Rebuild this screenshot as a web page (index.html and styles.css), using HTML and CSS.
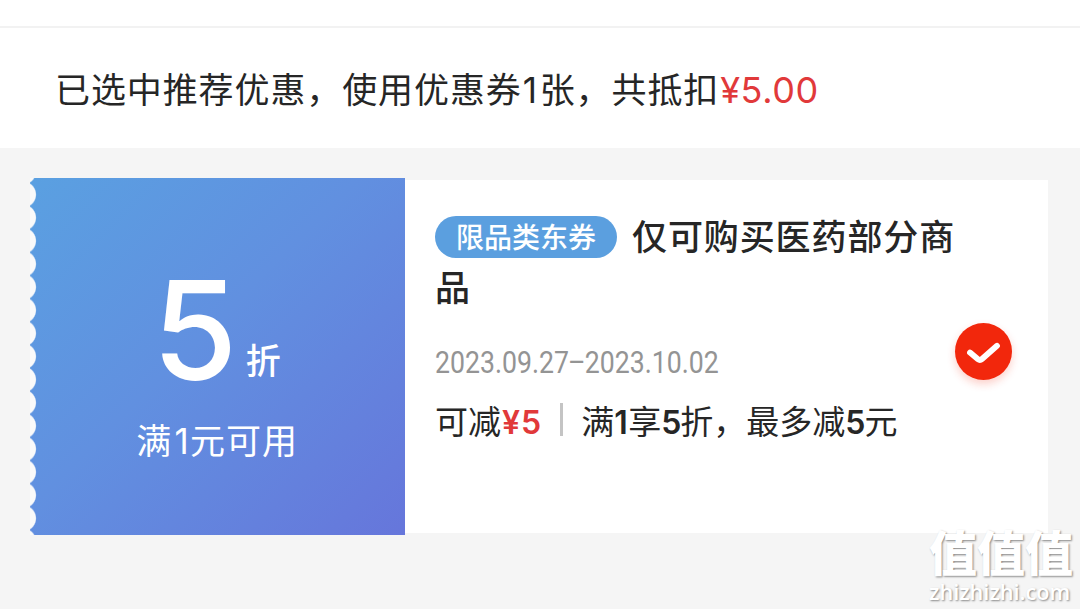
FILE: index.html
```html
<!DOCTYPE html>
<html lang="zh-CN">
<head>
    <meta charset="UTF-8">
    <title>优惠券</title>
    <link rel="stylesheet" href="styles.css">
</head>
<body>
    <div class="top-bar"></div>
    <div class="summary">已选中推荐优惠，使用优惠券<span class="one">1</span>张，共抵扣<span class="amount">¥5.00</span></div>

    <div class="coupon">
        <div class="coupon-left">
            <div class="discount"><span class="discount-num">5</span><span class="discount-unit">折</span></div>
            <div class="condition">满<span class="one">1</span>元可用</div>
        </div>
        <div class="coupon-right">
            <div class="info">
                <div class="title"><span class="tag">限品类东券</span>仅可购买医药部分商品</div>
                <div class="date">2023.09.27<span class="dash">–</span>2023.10.02</div>
                <div class="rule">
                    <span>可减<b class="num red">¥5</b></span>
                    <i class="divider"></i>
                    <span>满<b class="num num-one">1</b>享<b class="num">5</b>折，最多减<b class="num">5</b>元</span>
                </div>
            </div>
            <div class="check">
                <svg width="57" height="57" viewBox="0 0 57 57">
                    <path d="M15 29.5L23 36.2Q25 37.8 27 36L42 22.8" fill="none" stroke="#fff" stroke-width="5.8" stroke-linecap="round" stroke-linejoin="round"/>
                </svg>
            </div>
        </div>
    </div>

    <div class="watermark">
        <div class="watermark-name">值值值</div>
        <div class="watermark-url">zhizhizhi.com</div>
    </div>
</body>
</html>
```

FILE: styles.css
```css
* {
    margin: 0;
    padding: 0;
    box-sizing: border-box;
}
body {
    font-family: 'Noto Sans CJK SC', sans-serif;
    background: #f5f5f5;
    color: #262626;
    height: 609px;
    overflow: hidden;
    position: relative;
}
.top-bar {
    height: 28px;
    background: #fff;
    border-bottom: 2px solid #f2f2f2;
}
.summary {
    height: 120px;
    padding: 0 55px;
    background: #fff;
    font-size: 35px;
    font-weight: 400;
    letter-spacing: 0.9px;
    line-height: 119px;
    white-space: nowrap;
}
.one {
    display: inline-block;
    width: 18px;
    font-family: Inter, sans-serif;
    text-indent: 1px;
    letter-spacing: 0;
}
.amount {
    margin-left: 1px;
    font-family: Inter, sans-serif;
    font-size: 36px;
    letter-spacing: 0.6px;
    color: #e1393a;
}
.coupon {
    display: flex;
    align-items: center;
    margin: 30px 32px 0 30px;
    height: 357px;
}
.coupon-left {
    flex: none;
    width: 375px;
    height: 357px;
    padding-top: 83px;
    position: relative;
    background: linear-gradient(135deg, #5aa0e1 0%, #6190e0 45%, #6676db 100%);
    color: #fff;
    text-align: center;
}
/* perforated left edge */
.coupon-left::before {
    content: '';
    position: absolute;
    left: 0;
    top: 0;
    width: 7px;
    height: 100%;
    background: radial-gradient(circle at -7px 50%, #fafafa 12.4px, transparent 13.6px) 0 5px / 7px 23.13px repeat-y;
}
.discount {
    display: flex;
    justify-content: center;
    align-items: baseline;
    height: 138px;
    padding-right: 2px;
    line-height: 138px;
}
.discount-num {
    font-family: Inter, sans-serif;
    font-size: 138px;
    font-weight: 500;
}
.discount-unit {
    margin-left: 8px;
    padding-bottom: 8px;
    align-self: flex-end;
    font-size: 35px;
    font-weight: 500;
    line-height: 64px;
}
.condition {
    margin-top: 13px;
    padding-right: 1px;
    font-size: 35px;
    letter-spacing: 0.9px;
    line-height: 54px;
}
.coupon-right {
    flex: 1;
    display: flex;
    height: 353px;
    padding: 29px 36px 0 30px;
    background: #fff;
}
.info {
    width: 520px;
}
.title {
    margin-right: -6px;
    font-size: 35px;
    font-weight: 500;
    letter-spacing: 0.9px;
    line-height: 51px;
}
.tag {
    display: inline-block;
    height: 42px;
    margin-right: 15px;
    padding: 0 21px;
    border-radius: 21px;
    background: #5b9fdf;
    color: #fff;
    font-size: 28px;
    letter-spacing: 0;
    line-height: 41px;
    vertical-align: 2px;
}
.date {
    width: 330px;
    margin-top: 31px;
    font-family: Roboto, sans-serif;
    font-size: 31px;
    font-weight: 400;
    line-height: 42px;
    color: #949494;
    transform: scaleX(0.86);
    transform-origin: left;
}
.dash {
    margin: 0 -1px;
}
.rule {
    display: flex;
    align-items: center;
    margin-top: 12px;
    font-size: 33px;
    line-height: 48px;
    white-space: nowrap;
}
.num {
    font-family: Inter, sans-serif;
    font-size: 32px;
    font-weight: 600;
    letter-spacing: -1px;
}
.num-one {
    display: inline-block;
    width: 14px;
}
.red {
    margin-left: 1px;
    letter-spacing: 1px;
    color: #e1393a;
}
.divider {
    width: 3px;
    height: 33px;
    margin: -5px 18px 0;
    background: #c4c4c4;
}
.check {
    flex: none;
    width: 57px;
    height: 57px;
    margin: 114px 0 0 auto;
    border-radius: 50%;
    background: #f2270c;
    box-shadow: 0 4px 8px rgba(242, 39, 12, 0.22);
}
.check svg {
    display: block;
}
.watermark {
    position: absolute;
    right: 8px;
    bottom: 3px;
    width: 143px;
    color: #fff;
    text-shadow: 1px 1px 2px rgba(0, 0, 0, 0.45);
    white-space: nowrap;
}
.watermark-name {
    font-size: 48px;
    font-weight: 900;
    line-height: 54px;
}
.watermark-url {
    font-family: 'Open Sans', sans-serif;
    font-size: 21.7px;
    font-weight: 600;
    line-height: 29px;
}
```
